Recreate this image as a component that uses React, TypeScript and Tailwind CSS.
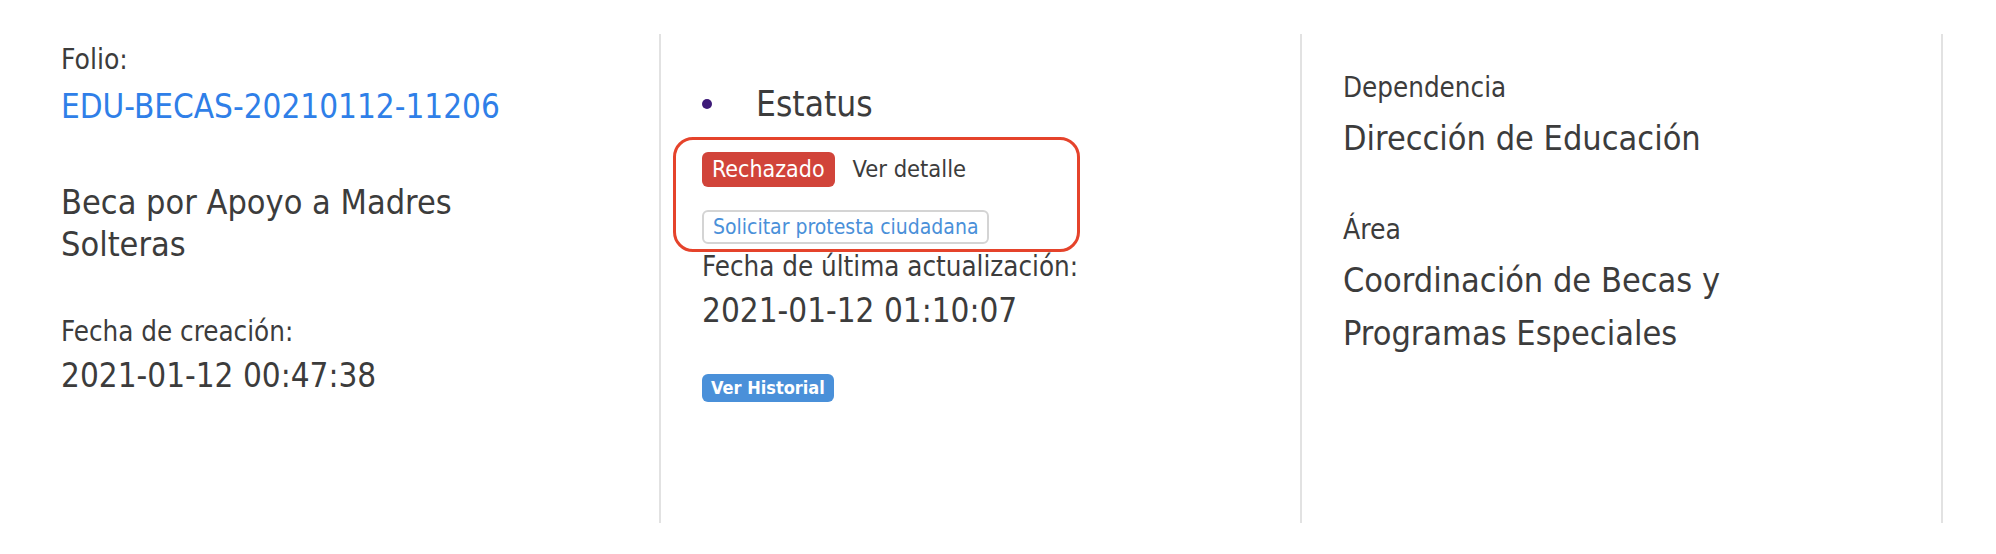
import React from 'react';

const FONT = "font-['DejaVu_Sans_Condensed','Liberation_Sans',sans-serif]";

export default function App() {
    return (
        <div className={`${FONT} bg-white w-full h-[554px] pt-[34px] pl-[20px] text-[#3c3c3c]`}>
            <div className="flex">
                {/* Solicitud */}
                <div className="w-[641px] h-[489px] border-r-2 border-[#e2e2e2] pl-[41px] pr-[130px]">
                    <div className="mt-[8px] text-[28px] leading-[36px]">Folio:</div>
                    <div className="mt-[7px] text-[33px] leading-[44px] text-[#2f7fe8] whitespace-nowrap">EDU-BECAS-20210112-11206</div>
                    <div className="mt-[52px] text-[34px] leading-[42px]">Beca por Apoyo a Madres Solteras</div>
                    <div className="mt-[46px] text-[27.5px] leading-[40px]">Fecha de creación:</div>
                    <div className="mt-[2px] text-[33px] leading-[46px]">2021-01-12 00:47:38</div>
                </div>

                {/* Estatus */}
                <div className="relative w-[641px] h-[489px] border-r-2 border-[#e2e2e2] pl-[41px] pr-[130px]">
                    <div className="mt-[47px] flex items-center text-[35px] leading-[46px]">
                        <span className="w-[10px] h-[10px] rounded-full bg-[#3d1a78] mr-[44px]" />
                        <span>Estatus</span>
                    </div>
                    <div className="mt-[25px] flex items-center h-[35px]">
                        <span className="h-[35px] px-[10px] rounded-[6px] bg-[#d1443a] text-white text-[23px] leading-[35px]">Rechazado</span>
                        <span className="ml-[18px] text-[23.5px] leading-[35px]">Ver detalle</span>
                    </div>
                    <div className="mt-[23px] flex">
                        <span className="h-[34px] px-[9px] rounded-[6px] border-2 border-[#d4d4d4] text-[#4a90d9] text-[21px] leading-[30px]">Solicitar protesta ciudadana</span>
                    </div>
                    <div className="mt-[2px] text-[27.5px] leading-[40px]">Fecha de última actualización:</div>
                    <div className="mt-[2px] text-[33px] leading-[46px]">2021-01-12 01:10:07</div>
                    <div className="mt-[40px] flex">
                        <span className="h-[28px] px-[9px] rounded-[6px] bg-[#4a90d9] text-white font-bold text-[18px] leading-[28px]">Ver Historial</span>
                    </div>

                    {/* resaltado */}
                    <div className="absolute left-[12px] top-[103px] w-[407px] h-[115px] rounded-[20px] border-[3px] border-[#e5432b] pointer-events-none" />
                </div>

                {/* Dependencia */}
                <div className="w-[641px] h-[489px] border-r-2 border-[#e2e2e2] pl-[41px] pr-[130px]">
                    <div className="mt-[34px] text-[27.5px] leading-[38px]">Dependencia</div>
                    <div className="mt-[9px] text-[34px] leading-[46px]">Dirección de Educación</div>
                    <div className="mt-[50px] text-[28px] leading-[38px]">Área</div>
                    <div className="mt-[5px] text-[34px] leading-[53px]">Coordinación de Becas y Programas Especiales</div>
                </div>
            </div>
        </div>
    );
}
